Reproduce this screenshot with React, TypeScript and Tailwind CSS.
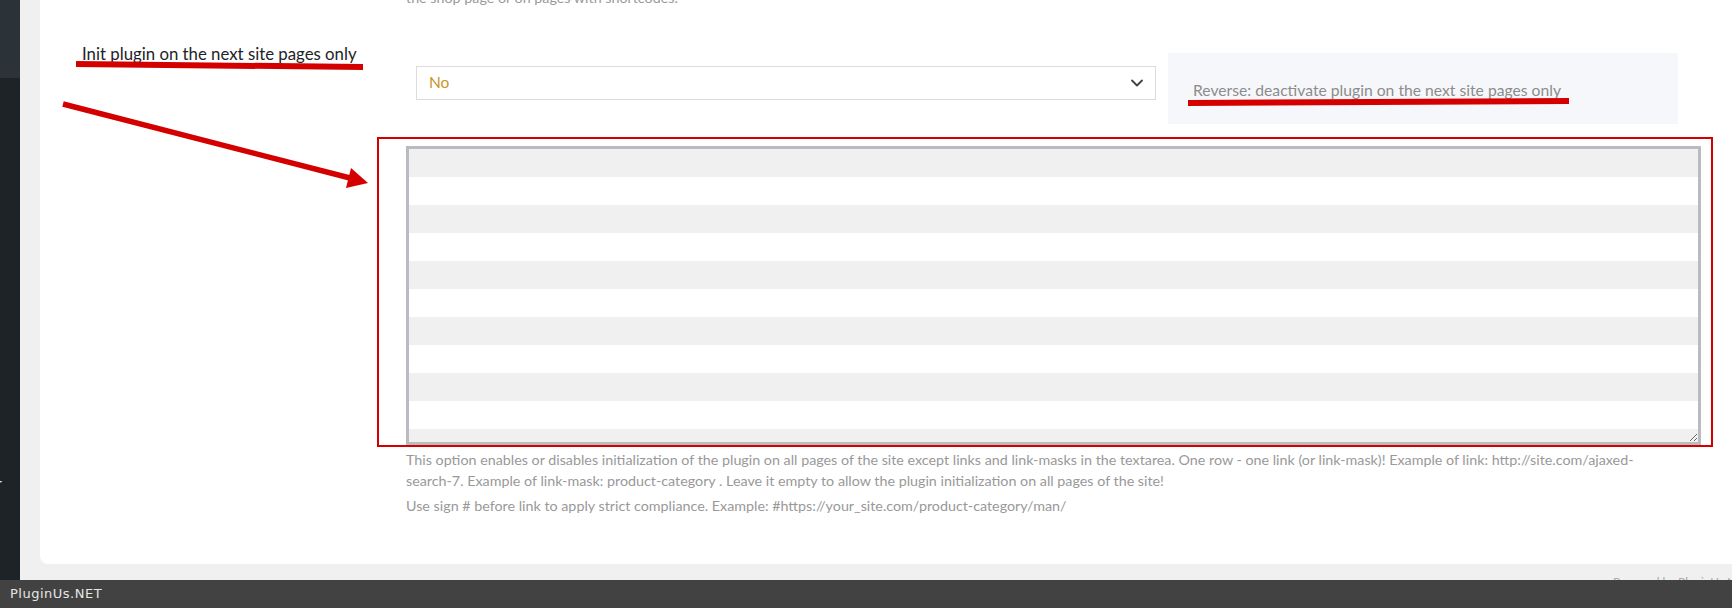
import { ChevronDown } from 'lucide-react';

const font = "font-['Lato','Noto_Sans',sans-serif]";

function Annotations() {
  // red marker strokes drawn over the screenshot
  return (
    <svg className="pointer-events-none absolute inset-0" width="1732" height="608" viewBox="0 0 1732 608">
      <polygon points="76,61 363,64 363,70 76,67" fill="#d40000" />
      <polygon points="1188,100 1569,98 1569,104 1188,106" fill="#d40000" />
      <line x1="63" y1="104" x2="350" y2="178" stroke="#d40000" strokeWidth="5.5" />
      <polygon points="368,183 346,188 351,168" fill="#d40000" />
      <rect x="378" y="138" width="1334" height="308" fill="none" stroke="#d40000" strokeWidth="2" />
    </svg>
  );
}

export default function App() {
  return (
    <div className={`relative h-[608px] w-[1732px] overflow-hidden bg-[#f0f0f1] ${font}`}>
      <div className="flex h-[608px]">
        {/* collapsed admin menu */}
        <aside className="flex w-[20px] shrink-0 flex-col bg-[#1d2327]">
          <div className="h-[78px] bg-[#2c3338]" />
          <div className="mt-[396px] -ml-[3px] text-[13px] leading-[18px] text-[#f0f0f1]">r</div>
        </aside>

        <main className="flex flex-1 flex-col pl-[20px]">
          <div className="h-[564px] overflow-hidden rounded-bl-lg bg-white">
            <div className="pl-[366px] -mt-[13px] text-[14.3px] leading-[21px] text-[#999]">
              the shop page or on pages with shortcodes.
            </div>

            <div className="flex pl-[42px] mt-[32px]">
              <div className="w-[324px] shrink-0 pt-[3px] text-[16.8px] leading-[22px] text-[#1d2327]">
                Init plugin on the next site pages only
              </div>
              <div className="flex items-start gap-[12px] pt-[13px]">
                <div className="ml-[10px] mt-[13px] flex h-[34px] w-[740px] items-center justify-between border border-[#dcdcde] bg-white pl-[12px] pr-[8px]">
                  <span className="text-[15.5px] text-[#c8951f]">No</span>
                  <ChevronDown className="h-[20px] w-[20px] text-[#3c434a]" strokeWidth={2.2} />
                </div>
                <div className="flex h-[71px] w-[510px] items-center bg-[#f6f7fb] px-[25px] pt-[4px] text-[15.7px] text-[#8c8c8c]">
                  Reverse: deactivate plugin on the next site pages only
                </div>
              </div>
            </div>

            <div className="pl-[366px] mt-[22px]">
              <textarea
                className="block h-[299px] w-[1295px] border-[3px] border-[#b8bbbf] bg-[image:repeating-linear-gradient(#f0f0f0_0px,#f0f0f0_28px,#ffffff_28px,#ffffff_56px)] outline-none"
                defaultValue=""
              />
              <p className="mt-[4px] w-[1295px] text-[14.3px] leading-[21px] text-[#999]">
                This option enables or disables initialization of the plugin on all pages of the site except links and link-masks in the textarea. One row - one link (or link-mask)! Example of link: http://site.com/ajaxed-
                <br />
                search-7. Example of link-mask: product-category . Leave it empty to allow the plugin initialization on all pages of the site!
              </p>
              <p className="mt-[4px] text-[14.3px] leading-[21px] text-[#999]">
                Use sign # before link to apply strict compliance. Example: #https://your_site.com/product-category/man/
              </p>
            </div>
          </div>
          <div className="ml-[1573px] whitespace-nowrap pt-[10px] text-[12px] leading-[16px] text-[#aaa]">
            Powered by PluginUs.NET
          </div>
        </main>
      </div>

      <footer className="absolute bottom-0 left-0 flex h-[28px] w-full items-center bg-[#424242] pl-[10px] font-['DejaVu_Sans',sans-serif] text-[13px] tracking-[0.5px] text-[#e6e6e6]">
        PluginUs.NET
      </footer>

      <Annotations />
    </div>
  );
}
